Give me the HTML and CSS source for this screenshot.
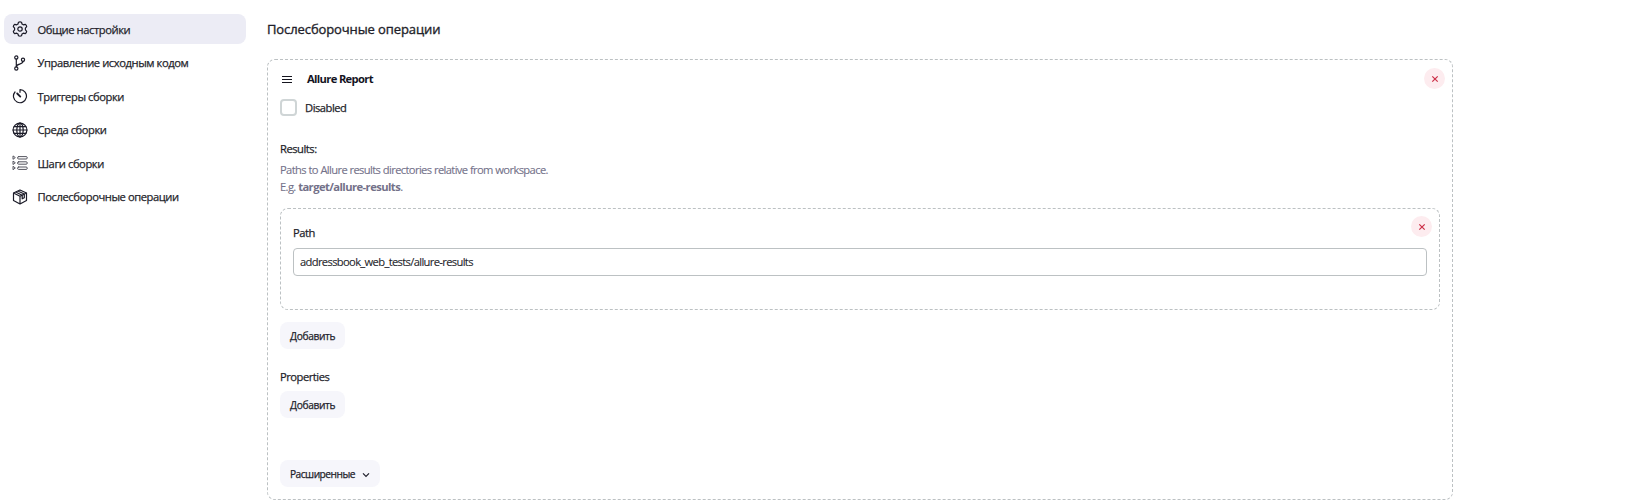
FILE: index.html
```html
<!DOCTYPE html>
<html lang="ru">
<head>
<meta charset="utf-8">
<title>Послесборочные операции</title>
<link rel="stylesheet" href="styles.css">
</head>
<body>
<div class="layout">
  <nav class="sidebar">
    <a class="task task-active"><svg class="icon" viewBox="0 0 16 16"><path d="M6.500 1.200Q8 .4 9.500 1.200L10 3l1.300.8 1.900-.5q1.400.8 1.500 2.400L13.400 7.200v1.600l1.300 1.500q-.1 1.600-1.500 2.400l-1.900-.5-1.300.8-.5 1.800q-1.500.8-3 0L6 13l-1.300-.8-1.900.5q-1.400-.8-1.500-2.400l1.300-1.500V7.200L1.300 5.700q.1-1.600 1.500-2.400l1.900.5L6 3z"/><circle cx="8" cy="8" r="2.200"/></svg><span>Общие настройки</span></a>
    <a class="task"><svg class="icon" viewBox="0 0 16 16"><circle cx="4.300" cy="2.500" r="1.600"/><circle cx="4.300" cy="13.500" r="1.600"/><circle cx="11" cy="4.700" r="1.600"/><path d="M4.300 4.100v7.800M11 6.300c0 4-6.700 1.600-6.700 5.600"/></svg><span>Управление исходным кодом</span></a>
    <a class="task"><svg class="icon" viewBox="0 0 16 16"><path d="M8 1.700A6.500 6.500 0 1 1 3 4M8 1.700v2.600"/><path class="thick" d="M5.200 5.500 8.300 8.600"/></svg><span>Триггеры сборки</span></a>
    <a class="task"><svg class="icon" viewBox="0 0 16 16"><circle cx="8" cy="8" r="6.900"/><ellipse cx="8" cy="8" rx="3.200" ry="6.900"/><path d="M8 1v14M1 8h14M2.200 4.600h11.600M2.200 11.400h11.600"/></svg><span>Среда сборки</span></a>
    <a class="task"><svg class="icon icon-steps" viewBox="0 0 16 16"><rect x="5.500" y="1.600" width="9.800" height="2.400" rx="1.200"/><rect x="5.500" y="6.800" width="9.800" height="2.400" rx="1.200"/><rect x="5.500" y="12" width="9.800" height="2.400" rx="1.200"/><path d="M1 1.300v3l2-1.500zM1 6.500v3L3 8zM1 11.700v3l2-1.500z"/></svg><span>Шаги сборки</span></a>
    <a class="task"><svg class="icon" viewBox="0 0 16 16"><path d="M8 1l6.500 3v7.500L8 15l-6.500-3.500V4zM1.500 4 8 7.300 14.500 4M8 7.300V15M3.700 3l6.500 3.200M5.800 2l6.500 3M10.200 6.200v3.600l2.100-1.100V5"/></svg><span>Послесборочные операции</span></a>
  </nav>
  <main class="content">
    <h1 class="title"><span>Послесборочные операции</span></h1>
    <section class="panel">
      <button class="close close-outer" aria-label="Удалить"><svg viewBox="0 0 8 8"><path d="M1.300 1.300l5.400 5.400M6.700 1.300 1.300 6.700"/></svg></button>
      <header class="panel-head"><svg class="grip" viewBox="0 0 10 8"><path d="M0 1.500h10M0 4.500h10M0 7.500h10"/></svg><b>Allure Report</b></header>
      <label class="check"><i class="box"></i><span>Disabled</span></label>
      <div class="label results"><span>Results:</span></div>
      <p class="help"><span>Paths to Allure results directories relative from workspace.</span><br><span>E.g. <b>target/allure-results</b>.</span></p>
      <div class="repeat">
        <button class="close close-inner" aria-label="Удалить"><svg viewBox="0 0 8 8"><path d="M1.300 1.300l5.400 5.400M6.700 1.300 1.300 6.700"/></svg></button>
        <div class="label path"><span>Path</span></div>
        <div class="input"><span>addressbook_web_tests/allure-results</span></div>
      </div>
      <button class="button"><span>Добавить</span></button>
      <div class="label properties"><span>Properties</span></div>
      <button class="button"><span>Добавить</span></button>
      <button class="button advanced"><span>Расширенные</span><svg class="chevron" viewBox="0 0 8 6"><path d="M1 1.300l3 3 3-3"/></svg></button>
    </section>
  </main>
</div>
</body>
</html>
```
FILE: styles.css
```css
* { box-sizing: border-box; }
body { margin: 0; background: #fff; color: #1f1f2b; font: 400 11.2px/17px "Open Sans", "Noto Sans", sans-serif; letter-spacing: -.48px; -webkit-text-stroke: .25px; }
.layout { display: flex; height: 503px; overflow: hidden; }
.sidebar { width: 267px; padding: 14px 21px 0 4px; letter-spacing: -.43px; }
.task { display: flex; align-items: center; height: 30px; margin-bottom: 3.5px; padding-left: 8px; border-radius: 8px; white-space: nowrap; }
.task-active { background: #ececf5; }
.task span { margin-left: 9.500px; }
.icon { width: 16px; height: 16px; flex: none; fill: none; stroke: #1b1b28; stroke-width: 1.200; stroke-linejoin: round; stroke-linecap: round; }
.icon .thick { stroke-width: 1.800; }
.icon-steps { stroke: #55555f; stroke-width: 1; }
.content { width: 1186px; }
.title { margin: 18px 0 19px; font-size: 13px; line-height: 22px; font-weight: 400; letter-spacing: -.1px; -webkit-text-stroke: .35px; }
.panel { position: relative; height: 441px; padding: 8px 12px; border: 1px dashed #bcc1c3; border-radius: 8px; }
.panel-head { display: flex; align-items: center; height: 20px; padding-left: 2px; color: #14141f; -webkit-text-stroke: 0; }
.panel-head b { margin-left: 15px; letter-spacing: -.66px; }
.grip { width: 10px; height: 8px; margin-top: 1px; stroke: #15151f; stroke-width: 1; }
.check { display: flex; align-items: center; height: 17px; margin-top: 11px; }
.box { width: 17px; height: 17px; border: 2px solid #cfd5d6; border-radius: 4px; }
.check span { margin: -1px 0 0 8px; }
.label { height: 17px; }
.results { margin-top: 24px; }
.help { margin: 4px 0 13px; color: #737189; letter-spacing: -.63px; word-spacing: .2px; -webkit-text-stroke: .1px; }
.help b { letter-spacing: -.56px; -webkit-text-stroke: 0; }
.repeat { position: relative; height: 102px; padding: 15px 12px; border: 1px dashed #bcc1c3; border-radius: 8px; }
.input { display: flex; align-items: center; height: 28px; margin-top: 7px; padding: 0 0 2px 6px; background: #fff; border: 1px solid #bcc1c3; border-radius: 4px; letter-spacing: -.66px; -webkit-text-stroke: .1px; }
.button { display: flex; align-items: center; height: 27px; width: 65px; margin: 12px 0 0; padding: 2px 0 0 10px; border: 0; border-radius: 8px; background: #f6f6fb; color: inherit; font: 400 10.200px/17px "Open Sans", "Noto Sans", sans-serif; letter-spacing: -.34px; }
.properties { margin-top: 19px; }
.properties + .button { margin-top: 6px; }
.advanced { width: 100px; margin-top: 42px; letter-spacing: -.52px; }
.chevron { width: 8px; height: 6px; margin-left: 7px; fill: none; stroke: #1f1f2b; stroke-width: 1.200; }
.close { position: absolute; display: grid; place-items: center; width: 21px; height: 21px; padding: 0; border: 0; border-radius: 50%; background: #fdecef; }
.close svg { width: 8px; height: 8px; stroke: #cc2f47; stroke-width: 1.200; }
.close-outer { top: 8px; right: 7px; }
.close-inner { top: 7px; right: 7px; }
```
